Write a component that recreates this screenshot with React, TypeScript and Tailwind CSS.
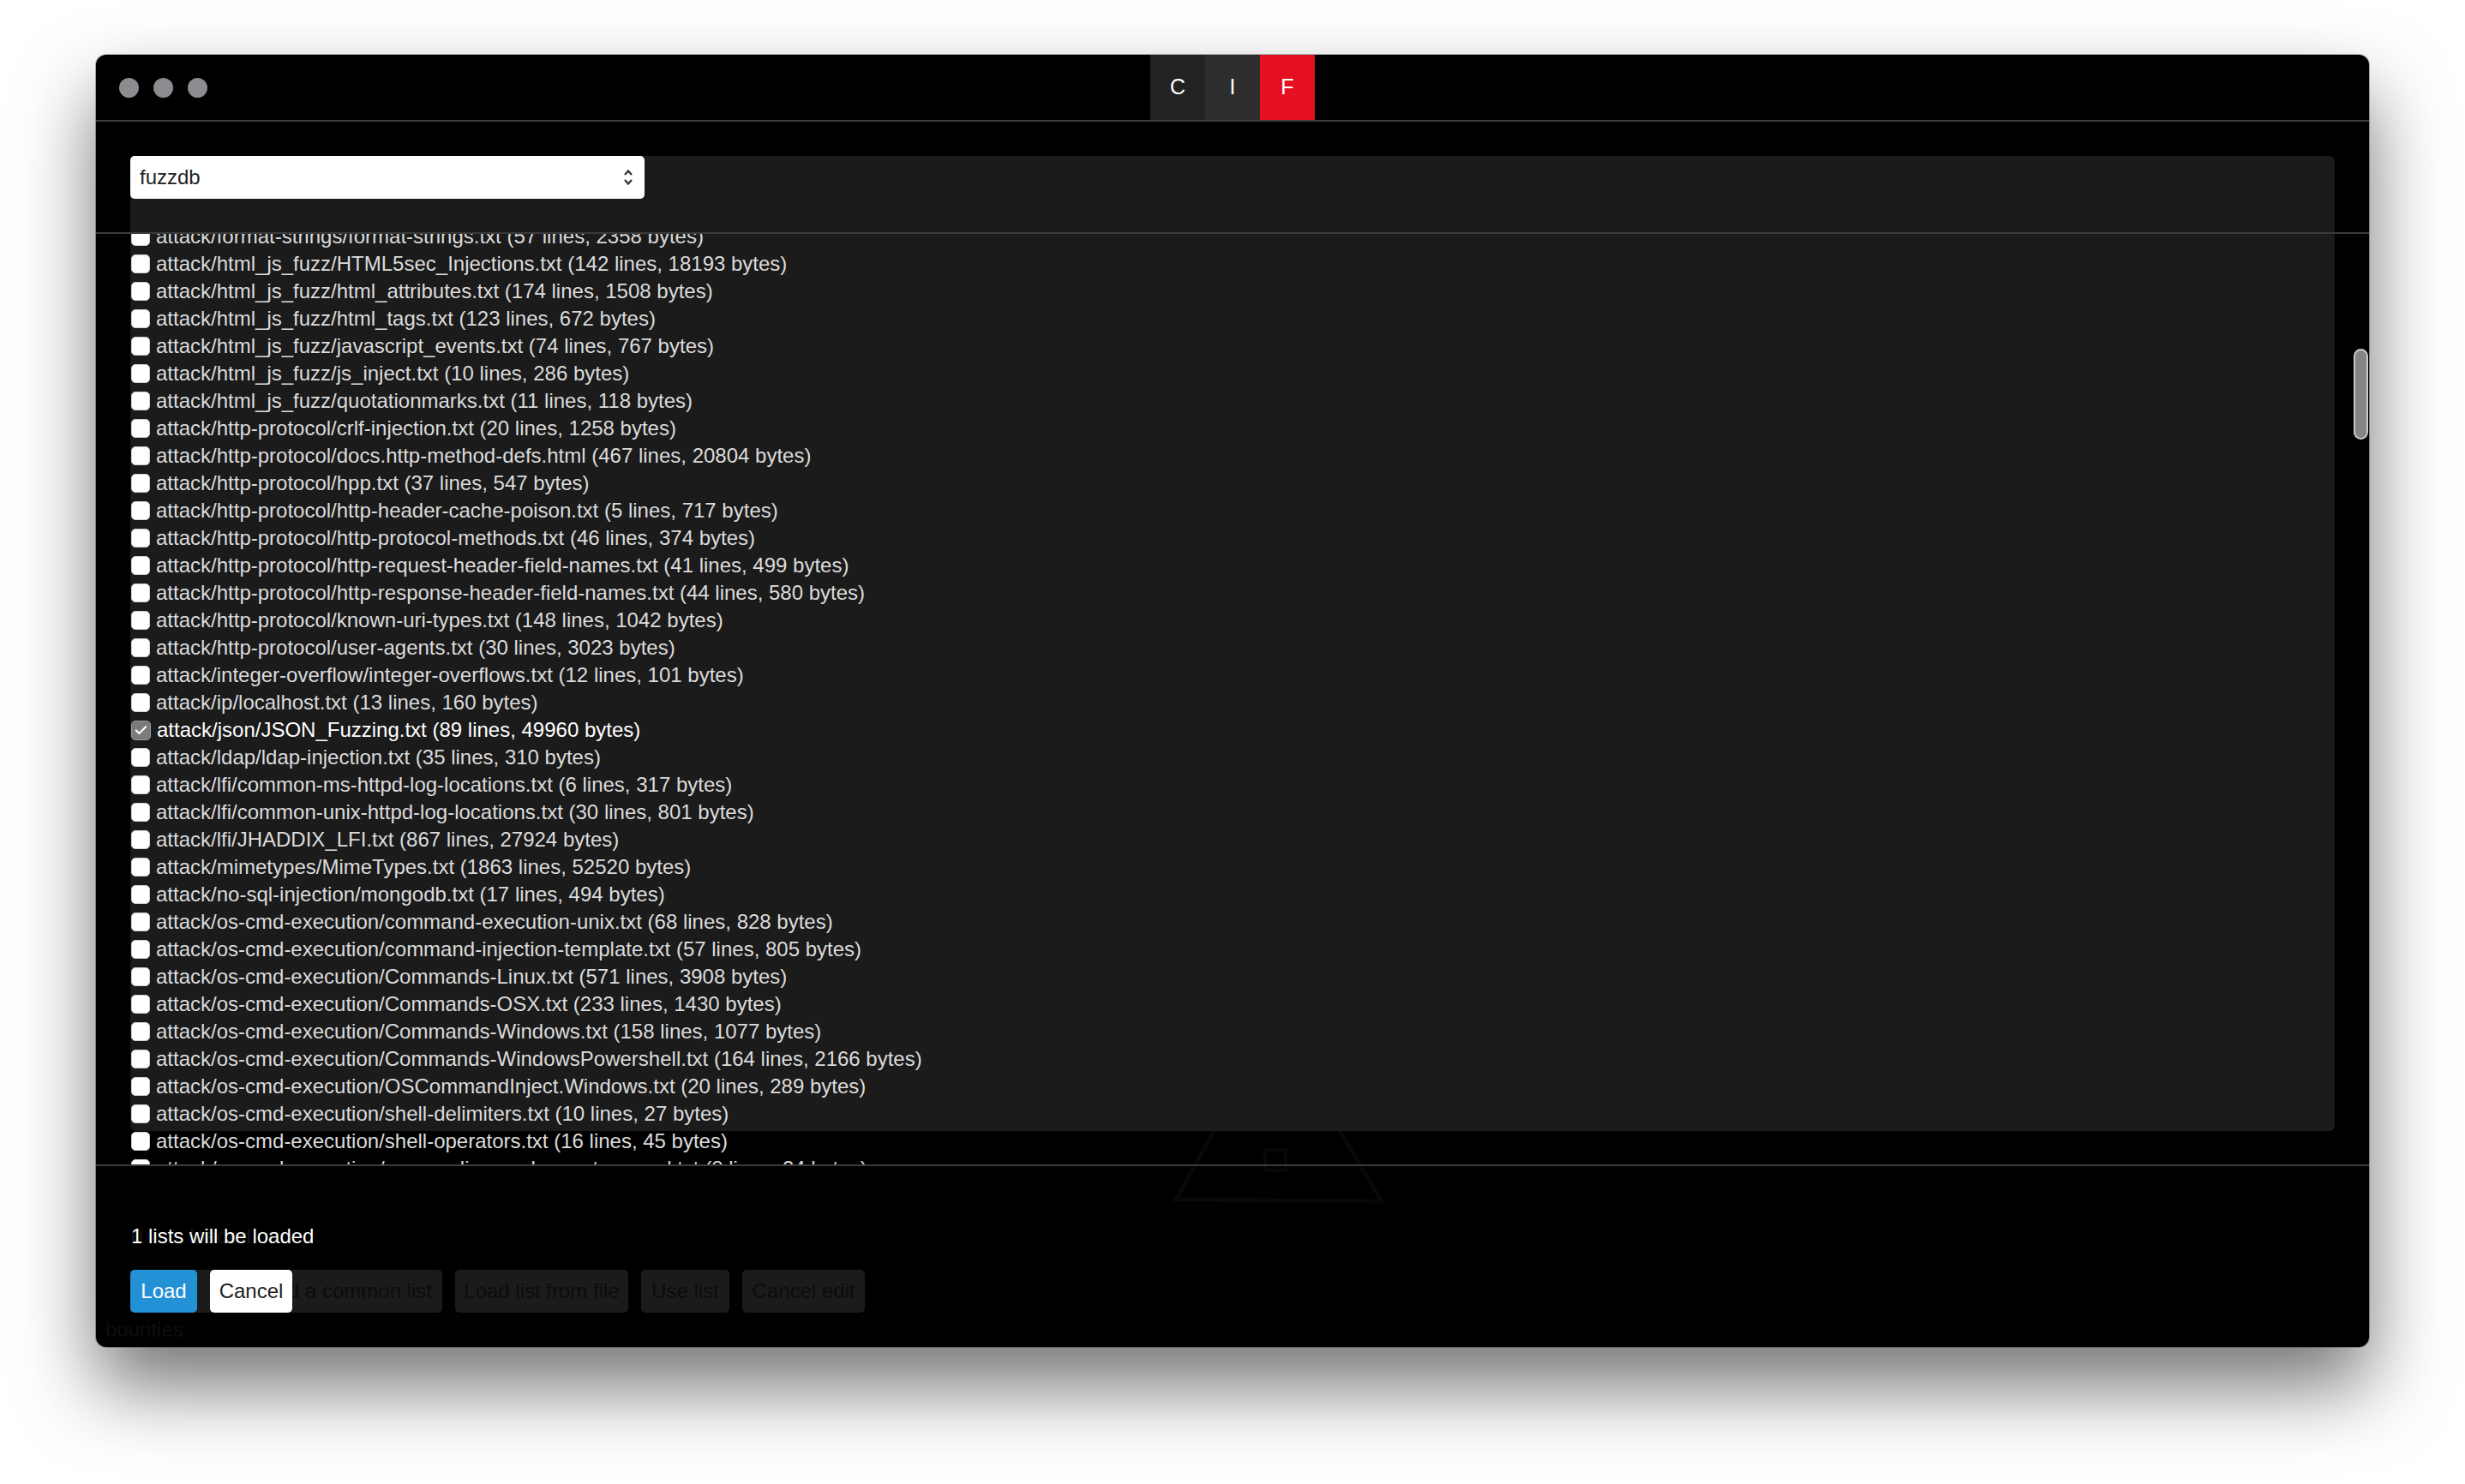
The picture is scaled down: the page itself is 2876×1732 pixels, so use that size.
import { Check } from "lucide-react";

type Row = { name: string; checked?: boolean };

const rows: Row[] = [
  { name: "attack/format-strings/format-strings.txt (57 lines, 2358 bytes)" },
  { name: "attack/html_js_fuzz/HTML5sec_Injections.txt (142 lines, 18193 bytes)" },
  { name: "attack/html_js_fuzz/html_attributes.txt (174 lines, 1508 bytes)" },
  { name: "attack/html_js_fuzz/html_tags.txt (123 lines, 672 bytes)" },
  { name: "attack/html_js_fuzz/javascript_events.txt (74 lines, 767 bytes)" },
  { name: "attack/html_js_fuzz/js_inject.txt (10 lines, 286 bytes)" },
  { name: "attack/html_js_fuzz/quotationmarks.txt (11 lines, 118 bytes)" },
  { name: "attack/http-protocol/crlf-injection.txt (20 lines, 1258 bytes)" },
  { name: "attack/http-protocol/docs.http-method-defs.html (467 lines, 20804 bytes)" },
  { name: "attack/http-protocol/hpp.txt (37 lines, 547 bytes)" },
  { name: "attack/http-protocol/http-header-cache-poison.txt (5 lines, 717 bytes)" },
  { name: "attack/http-protocol/http-protocol-methods.txt (46 lines, 374 bytes)" },
  { name: "attack/http-protocol/http-request-header-field-names.txt (41 lines, 499 bytes)" },
  { name: "attack/http-protocol/http-response-header-field-names.txt (44 lines, 580 bytes)" },
  { name: "attack/http-protocol/known-uri-types.txt (148 lines, 1042 bytes)" },
  { name: "attack/http-protocol/user-agents.txt (30 lines, 3023 bytes)" },
  { name: "attack/integer-overflow/integer-overflows.txt (12 lines, 101 bytes)" },
  { name: "attack/ip/localhost.txt (13 lines, 160 bytes)" },
  { name: "attack/json/JSON_Fuzzing.txt (89 lines, 49960 bytes)", checked: true },
  { name: "attack/ldap/ldap-injection.txt (35 lines, 310 bytes)" },
  { name: "attack/lfi/common-ms-httpd-log-locations.txt (6 lines, 317 bytes)" },
  { name: "attack/lfi/common-unix-httpd-log-locations.txt (30 lines, 801 bytes)" },
  { name: "attack/lfi/JHADDIX_LFI.txt (867 lines, 27924 bytes)" },
  { name: "attack/mimetypes/MimeTypes.txt (1863 lines, 52520 bytes)" },
  { name: "attack/no-sql-injection/mongodb.txt (17 lines, 494 bytes)" },
  { name: "attack/os-cmd-execution/command-execution-unix.txt (68 lines, 828 bytes)" },
  { name: "attack/os-cmd-execution/command-injection-template.txt (57 lines, 805 bytes)" },
  { name: "attack/os-cmd-execution/Commands-Linux.txt (571 lines, 3908 bytes)" },
  { name: "attack/os-cmd-execution/Commands-OSX.txt (233 lines, 1430 bytes)" },
  { name: "attack/os-cmd-execution/Commands-Windows.txt (158 lines, 1077 bytes)" },
  { name: "attack/os-cmd-execution/Commands-WindowsPowershell.txt (164 lines, 2166 bytes)" },
  { name: "attack/os-cmd-execution/OSCommandInject.Windows.txt (20 lines, 289 bytes)" },
  { name: "attack/os-cmd-execution/shell-delimiters.txt (10 lines, 27 bytes)" },
  { name: "attack/os-cmd-execution/shell-operators.txt (16 lines, 45 bytes)" },
  { name: "attack/os-cmd-execution/source-disc-cmd-exec-traversal.txt (8 lines, 24 bytes)" },
];

function ListRow({ name, checked }: Row) {
  return (
    <label className="flex items-center gap-[7px] h-[32px] whitespace-nowrap">
      {checked ? (
        <span className="flex justify-center items-center w-[23px] h-[23px] rounded-[5px] bg-[#7b7b7b] border border-[#9b9b9b]">
          <Check className="w-[17px] h-[17px] text-white" strokeWidth={3} />
        </span>
      ) : (
        <span className="w-[22px] h-[22px] rounded-[5px] bg-white border border-[#d0d0d0]" />
      )}
      <span className={checked ? "text-white" : "text-[#dcdcdc]"}>{name}</span>
    </label>
  );
}

export default function App() {
  return (
    <div
      className="w-[2876px] h-[1732px] bg-white pl-[112px] pt-[64px] overflow-hidden"
      style={{ fontFamily: '"Liberation Sans", Arial, sans-serif' }}
    >
      <div className="relative flex flex-col w-[2652px] h-[1508px] bg-black rounded-[12px] overflow-hidden shadow-[0_0_0_1px_rgba(0,0,0,0.3),0_46px_90px_rgba(0,0,0,0.55)]">
        {/* title bar */}
        <div className="relative flex items-center h-[78px] border-b-2 border-[#3b3b3b] shrink-0">
          <div className="flex gap-[17px] pl-[27px]">
            <span className="w-[23px] h-[23px] rounded-full bg-[#8c8c90]" />
            <span className="w-[23px] h-[23px] rounded-full bg-[#8c8c90]" />
            <span className="w-[23px] h-[23px] rounded-full bg-[#8c8c90]" />
          </div>
          <div className="absolute top-0 left-1/2 flex -translate-x-1/2 text-white text-[25px]">
            <div className="flex justify-center items-center w-[64px] h-[76px] bg-[#222222]">C</div>
            <div className="flex justify-center items-center w-[64px] h-[76px] bg-[#2d2d2d]">I</div>
            <div className="flex justify-center items-center w-[64px] h-[76px] bg-[#e61024]">F</div>
          </div>
        </div>

        {/* body */}
        <div className="relative flex flex-col flex-1 text-[24px] leading-[32px]">
          {/* faint background drawing */}
          <svg
            className="absolute left-[1250px] top-[1040px]"
            width="260"
            height="230"
            viewBox="0 0 260 230"
          >
            <path d="M125 10 L10 218 L250 220 Z" fill="none" stroke="#080808" strokeWidth="5" />
            <rect x="114" y="160" width="24" height="24" fill="none" stroke="#080808" strokeWidth="4" />
          </svg>

          <div className="relative mx-[40px] mt-[40px] h-[1138px] rounded-[6px] bg-[#1b1b1b]">
            <div className="flex items-center justify-between w-[600px] h-[50px] pl-[11px] pr-[13px] bg-white rounded-[5px] text-[#222] text-[24px]">
              <span>fuzzdb</span>
              <svg width="12" height="22" viewBox="0 0 12 22" fill="none" stroke="#333" strokeWidth="2.2">
                <path d="M2 8 L6 3.5 L10 8" />
                <path d="M2 14 L6 18.5 L10 14" />
              </svg>
            </div>
          </div>

          <div className="relative mt-[107px] pl-[41px] text-white">
            <span className="absolute left-[41px] top-0 text-[#161616]">0 lists loaded</span>
            <span className="relative">1 lists will be loaded</span>
          </div>

          <div className="relative flex gap-[15px] mt-[23px] pl-[40px] text-[#0c0c0c] whitespace-nowrap">
            <div className="flex justify-end items-center w-[364px] h-[50px] pr-[12px] rounded-[5px] bg-[#1b1b1b]">
              Load a common list
            </div>
            <div className="flex justify-center items-center w-[202px] h-[50px] rounded-[5px] bg-[#1b1b1b]">
              Load list from file
            </div>
            <div className="flex justify-center items-center w-[103px] h-[50px] rounded-[5px] bg-[#1b1b1b]">
              Use list
            </div>
            <div className="flex justify-center items-center w-[143px] h-[50px] rounded-[5px] bg-[#1b1b1b]">
              Cancel edit
            </div>
            <div className="absolute top-0 left-[40px] flex gap-[15px]">
              <button className="w-[78px] h-[50px] rounded-[5px] bg-[#2291d6] text-white">Load</button>
              <button className="w-[96px] h-[50px] rounded-[5px] bg-white text-[#1e1e1e]">Cancel</button>
            </div>
          </div>

          <div className="pl-[11px] mt-[4px] text-[#0e0e0e]">bounties</div>

          {/* list overlay */}
          <div className="absolute top-[129px] left-0 right-0 h-[1090px] border-y-2 border-[#3b3b3b] overflow-hidden">
            <div className="flex flex-col -mt-[13px] pl-[41px]">
              {rows.map((r) => (
                <ListRow key={r.name} name={r.name} checked={r.checked} />
              ))}
            </div>
            <div className="absolute right-[1px] top-[134px] w-[17px] h-[106px] rounded-full bg-[#858585] border-2 border-[#c8c8c8]" />
          </div>
        </div>
      </div>
    </div>
  );
}
